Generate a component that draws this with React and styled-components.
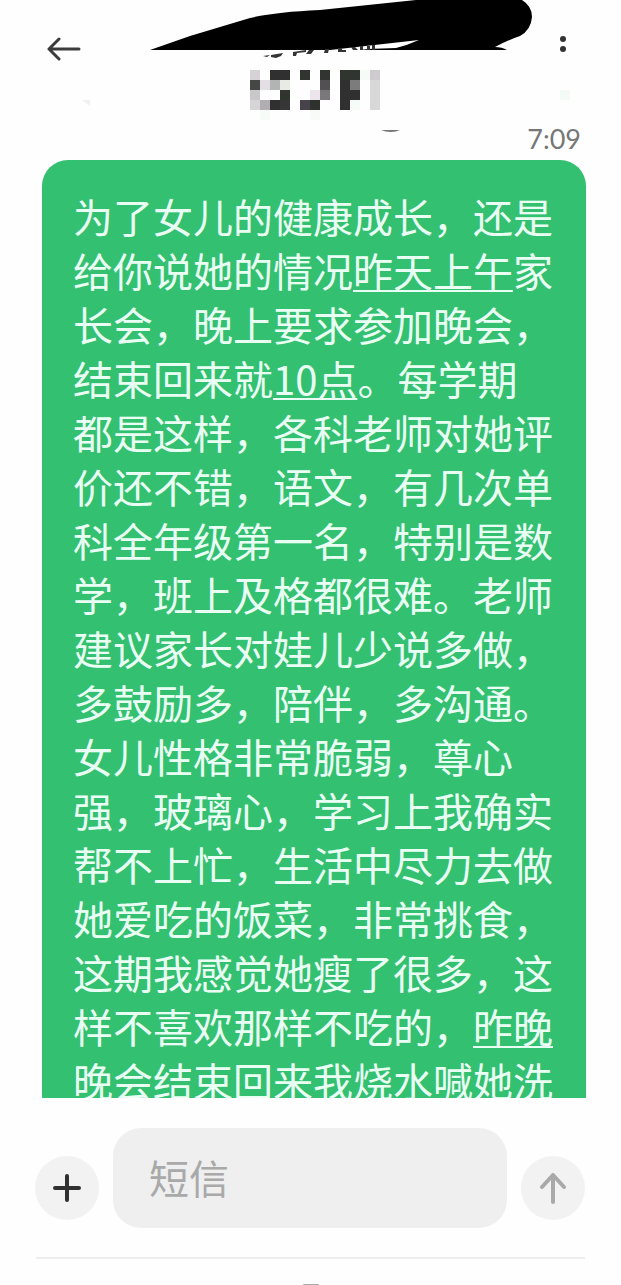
/*
문자 대화 화면 : 상단 바, 보낸 메시지, 입력창
 */
import React, { useCallback, useState } from "react";
import styled, { createGlobalStyle } from "styled-components";

const GlobalStyle = createGlobalStyle`
  * {
    box-sizing: border-box;
  }
  body {
    margin: 0;
    background-color: #fefefe;
    font-family: "Noto Sans CJK SC", "Noto Sans", sans-serif;
  }
`;

const Page = styled.div`
  display: flex;
  flex-direction: column;
  height: 100vh;
  overflow: hidden;
`;
const Header = styled.header`
  position: relative;
  flex: none;
  display: flex;
  justify-content: space-between;
  padding: 25px 34px 0 40px;
`;
const IconButton = styled.button`
  display: flex;
  align-items: center;
  justify-content: center;
  width: 48px;
  height: 48px;
  padding: 0;
  border: 0;
  background: none;
`;
const Marks = styled.svg`
  position: absolute;
  top: 0;
  left: 0;
  pointer-events: none;
`;
const Time = styled.time`
  flex: none;
  padding: 48px 40px 0 0;
  text-align: right;
  font-family: Lato, sans-serif;
  font-size: 27px;
  line-height: 36px;
  color: #777777;
`;
const Messages = styled.main`
  flex: 1;
  min-height: 0;
  overflow: hidden;
  padding: 3px 35px 0 42px;
`;
const Bubble = styled.div`
  padding: 29px 24px 29px 31px;
  border-radius: 26px;
  background-color: #34c071;
  color: #eafff4;
  font-size: 40px;
  line-height: 54px;
`;
const Line = styled.span`
  display: block;
  white-space: nowrap;
`;
const TimeLink = styled.a`
  color: inherit;
  text-decoration: underline;
  text-decoration-thickness: 2px;
  text-underline-offset: 3px;
`;
const Composer = styled.form`
  flex: none;
  display: flex;
  align-items: flex-end;
  gap: 14px;
  padding: 30px 36px 29px 35px;
`;
const RoundButton = styled.button`
  display: flex;
  align-items: center;
  justify-content: center;
  flex: none;
  width: 64px;
  height: 64px;
  margin-bottom: 8px;
  padding: 0;
  border: 0;
  border-radius: 50%;
  background-color: #f2f2f2;
`;
const Input = styled.input`
  flex: 1;
  min-width: 0;
  height: 100px;
  padding: 0 36px 2px;
  border: 0;
  border-radius: 28px;
  outline: none;
  background-color: #efefef;
  color: #333333;
  font-family: inherit;
  font-size: 40px;
  &::placeholder {
    color: #a9a9a9;
    opacity: 1;
  }
`;
const Footer = styled.footer`
  flex: none;
  display: flex;
  justify-content: center;
  align-items: flex-end;
  height: 28px;
  margin: 0 36px;
  border-top: 2px solid #eeeeee;
`;

const lines = [
  ["为了女儿的健康成长，还是"],
  ["给你说她的情况", "昨天上午", "家"],
  ["长会，晚上要求参加晚会，"],
  ["结束回来就", "10点", "。每学期"],
  ["都是这样，各科老师对她评"],
  ["价还不错，语文，有几次单"],
  ["科全年级第一名，特别是数"],
  ["学，班上及格都很难。老师"],
  ["建议家长对娃儿少说多做，"],
  ["多鼓励多，陪伴，多沟通。"],
  ["女儿性格非常脆弱，尊心"],
  ["强，玻璃心，学习上我确实"],
  ["帮不上忙，生活中尽力去做"],
  ["她爱吃的饭菜，非常挑食，"],
  ["这期我感觉她瘦了很多，这"],
  ["样不喜欢那样不吃的，", "昨晚"],
  ["晚会结束回来我烧水喊她洗"],
];

// [x, y, color], 10px each
const blocks = [
  [250, 70, "#d7d2d5"], [270, 70, "#303030"], [280, 70, "#303030"],
  [250, 80, "#454745"], [260, 80, "#e2e0e4"], [270, 80, "#b3b3b3"], [280, 80, "#e6ebe4"],
  [250, 90, "#cac7cb"], [280, 90, "#303530"],
  [250, 100, "#d6d4d6"], [260, 100, "#b0aeb0"], [270, 100, "#303030"], [280, 100, "#363636"],
  [260, 110, "#f6fbf7"],
  [300, 70, "#303530"], [320, 70, "#303530"], [320, 80, "#525052"],
  [310, 90, "#ece6ec"], [320, 90, "#7b787c"],
  [300, 100, "#48424a"], [310, 100, "#2e322e"], [310, 110, "#f6fbf7"],
  [340, 70, "#303530"], [350, 70, "#303530"], [340, 80, "#303030"], [350, 80, "#7c7c7c"],
  [340, 90, "#303030"], [350, 90, "#303030"], [340, 100, "#303030"], [350, 100, "#f6fbf7"],
  [360, 70, "#f6fbf7"],
  [370, 70, "#cdcbcd"], [370, 80, "#d8d8d8"], [370, 90, "#d8d8d8"], [370, 100, "#d8d8d8"],
  [560, 90, "#f4faf5"],
];

const HeaderMarks = () => (
  <Marks width="621" height="140" viewBox="0 0 621 140" aria-hidden="true">
    <path
      d="M150 50 L190 36 L250 18 Q275 12 320 10 L416 0 H522 Q532 6 532 17 Q531 30 520 36 Q508 40 495 47 Q502 47 507 50 Z"
      fill="#000000"
    />
    <path d="M330 50 L419 40 Q408 45 396 48 L368 49 L360 50 Z" fill="#fefefe" />
    <path
      d="M263 56 L270 55 L267 57 Z M271 55 L283 53 L281 56 L276 58 L271 57 Z M293 52 L306 50 L306 52 L297 53 L296 56 L293 56 Z M306 54 L309 50 H314 L311 54 Z M325 49 H329 L328 53 H324 Z M338 48 H342 V50 H346 V52 H338 Z M351 47 H355 L358 50 H353 Z M360 46 H363 V50 H360 Z M367 46 H370 V50 H367 Z M372 45 H375 V50 H372 Z"
      fill="#333333"
    />
    <path d="M381 130 H400 Q396 132 391 132 Q385 132 381 130 Z" fill="#777777" />
    <path d="M82 100 H90 V106 Z" fill="#f1f1f1" />
    {blocks.map(([x, y, color]) => (
      <rect key={`${x}-${y}`} x={x} y={y} width="10" height="10" fill={color} />
    ))}
  </Marks>
);

const App = () => {
  const [message, setMessage] = useState("");
  const onMessageChange = useCallback((e) => {
    setMessage(e.target.value);
  }, []);
  const onSubmit = useCallback((e) => {
    e.preventDefault();
    setMessage("");
  }, []);

  return (
    <Page>
      <GlobalStyle />
      <Header>
        <IconButton type="button" aria-label="返回">
          <svg width="34" height="26" viewBox="0 0 34 26" fill="none" stroke="#3c3c3c" strokeWidth="3" strokeLinecap="round" strokeLinejoin="round">
            <path d="M12 3 L2 13 L12 23 M2 13 H32" />
          </svg>
        </IconButton>
        <IconButton type="button" aria-label="更多">
          <svg width="10" height="26" viewBox="0 0 10 26" fill="#333333">
            <circle cx="5" cy="3" r="3" />
            <circle cx="5" cy="13" r="3" />
          </svg>
        </IconButton>
        <HeaderMarks />
      </Header>
      <Time>7:09</Time>
      <Messages>
        <Bubble>
          {lines.map(([before, link, after]) => (
            <Line key={before}>
              {before}
              {link && <TimeLink href="#">{link}</TimeLink>}
              {after}
            </Line>
          ))}
        </Bubble>
      </Messages>
      <Composer onSubmit={onSubmit}>
        <RoundButton type="button" aria-label="添加">
          <svg width="28" height="28" viewBox="0 0 28 28" fill="none" stroke="#303030" strokeWidth="4" strokeLinecap="round">
            <path d="M14 2 V26 M2 14 H26" />
          </svg>
        </RoundButton>
        <Input
          type="text"
          name="message"
          aria-label="短信"
          placeholder="短信"
          value={message}
          onChange={onMessageChange}
        />
        <RoundButton type="submit" aria-label="发送">
          <svg width="28" height="32" viewBox="0 0 28 32" fill="none" stroke="#a9a9a9" strokeWidth="4" strokeLinecap="round" strokeLinejoin="round">
            <path d="M3 15 L14 3 L25 15 M14 3 V30" />
          </svg>
        </RoundButton>
      </Composer>
      <Footer>
        <svg width="16" height="1" viewBox="0 0 16 1" aria-hidden="true">
          <rect width="16" height="1" rx="1" fill="#aaaaaa" />
        </svg>
      </Footer>
    </Page>
  );
};
export default App;
